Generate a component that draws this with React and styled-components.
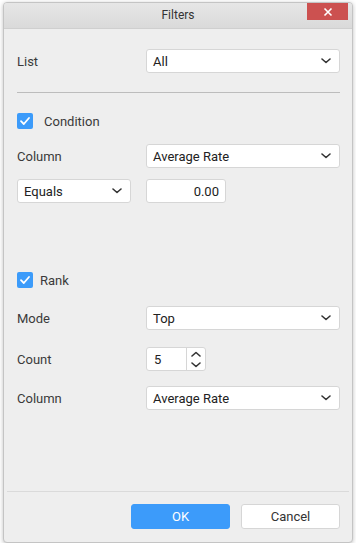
import styled, { createGlobalStyle } from "styled-components";

const Global = createGlobalStyle`
    html, body {
        margin: 0;
        padding: 0;
        background: #ffffff;
        font-family: Roboto, "Liberation Sans", sans-serif;
    }
`;

const Chevron = ({ up }) => (
    <svg width="10" height="6" viewBox="0 0 10 6">
        <path
            d={up ? "M1 5L5 1.5L9 5" : "M1 1L5 4.5L9 1"}
            fill="none"
            stroke="#333"
            strokeWidth="1.6"
            strokeLinecap="round"
            strokeLinejoin="round"
        />
    </svg>
);

const Select = ({ value, width }) => (
    <S.Select $width={width}>
        <span>{value}</span>
        <Chevron />
    </S.Select>
);

const CheckBox = ({ label, gap }) => (
    <S.CheckRow $gap={gap}>
        <S.Box>
            <svg width="12" height="10" viewBox="0 0 12 10">
                <path d="M2 5.2L4.8 8L10 2" fill="none" stroke="#fff" strokeWidth="1.8" strokeLinecap="round" strokeLinejoin="round" />
            </svg>
        </S.Box>
        <S.Label>{label}</S.Label>
    </S.CheckRow>
);

const App = () => {
    return (
        <>
            <Global />
            <S.Dialog>
                <S.TitleBar>
                    Filters
                    <S.Close>
                        <svg width="10" height="10" viewBox="0 0 10 10">
                            <path d="M1.5 1.5L8.5 8.5M8.5 1.5L1.5 8.5" stroke="#fff" strokeWidth="1.6" />
                        </svg>
                    </S.Close>
                </S.TitleBar>

                <S.Body>
                    <S.Row $top={20}>
                        <S.Label>List</S.Label>
                        <Select value="All" />
                    </S.Row>

                    <S.Divider />

                    <CheckBox label="Condition" gap={11} />

                    <S.Row $top={15}>
                        <S.Label>Column</S.Label>
                        <Select value="Average Rate" />
                    </S.Row>

                    <S.Row $top={11}>
                        <Select value="Equals" width={114} />
                        <S.NumberBox>0.00</S.NumberBox>
                    </S.Row>

                    <S.Spacer $h={69} />
                    <CheckBox label="Rank" gap={7} />

                    <S.Row $top={18}>
                        <S.Label>Mode</S.Label>
                        <Select value="Top" />
                    </S.Row>

                    <S.Row $top={17}>
                        <S.Label>Count</S.Label>
                        <S.Spin>
                            <S.SpinValue>5</S.SpinValue>
                            <S.SpinArrows>
                                <Chevron up />
                                <Chevron />
                            </S.SpinArrows>
                        </S.Spin>
                    </S.Row>

                    <S.Row $top={15}>
                        <S.Label>Column</S.Label>
                        <Select value="Average Rate" />
                    </S.Row>
                </S.Body>

                <S.Footer>
                    <S.Button $primary>OK</S.Button>
                    <S.Button>Cancel</S.Button>
                </S.Footer>
            </S.Dialog>
        </>
    );
};

export default App;

const S = {
    Dialog: styled.div`
        position: relative;
        margin: 2px 0 0 3px;
        width: 350px;
        height: 541px;
        box-sizing: border-box;
        border: 1px solid #c4c4c4;
        border-radius: 4px;
        background: #eeeeee;
        box-shadow: 0 1px 4px rgba(0, 0, 0, 0.25);
        display: flex;
        flex-direction: column;
        overflow: hidden;
    `,

    TitleBar: styled.div`
        height: 26px;
        padding-bottom: 2px;
        box-sizing: border-box;
        flex-shrink: 0;
        border-bottom: 1px solid #cfcfcf;
        background: linear-gradient(#e6e6e6, #dadada);
        display: flex;
        align-items: center;
        justify-content: center;
        font-size: 12px;
        color: #333;
    `,

    Close: styled.div`
        position: absolute;
        top: 0;
        right: 4px;
        width: 41px;
        height: 17px;
        background: #cc5150;
        display: flex;
        align-items: center;
        justify-content: center;
    `,

    Body: styled.div`
        flex: 1;
        padding: 0 12px 0 13px;
        display: flex;
        flex-direction: column;
    `,

    Row: styled.div`
        margin-top: ${(p) => p.$top}px;
        display: grid;
        grid-template-columns: 129px 1fr;
        align-items: center;
    `,

    Label: styled.span`
        font-size: 13px;
        color: #3a3a3a;
    `,

    Select: styled.div`
        width: ${(p) => (p.$width ? `${p.$width}px` : "auto")};
        height: 24px;
        box-sizing: border-box;
        background: #fff;
        border: 1px solid #d6d6d6;
        border-radius: 3px;
        padding: 0 8px 0 6px;
        display: flex;
        align-items: center;
        justify-content: space-between;
        font-size: 13px;
        color: #222;
    `,

    Divider: styled.div`
        margin-top: 19px;
        height: 1px;
        background: #bcbcbc;
    `,

    CheckRow: styled.div`
        margin-top: 20px;
        display: flex;
        align-items: center;
        gap: ${(p) => p.$gap}px;
    `,

    Box: styled.div`
        width: 16px;
        height: 16px;
        border-radius: 2px;
        background: #3c9bfa;
        display: flex;
        align-items: center;
        justify-content: center;
    `,

    NumberBox: styled.div`
        width: 80px;
        height: 24px;
        box-sizing: border-box;
        background: #fff;
        border: 1px solid #d6d6d6;
        border-radius: 3px;
        padding: 0 6px;
        display: flex;
        align-items: center;
        justify-content: flex-end;
        font-size: 13px;
        color: #222;
    `,

    Spacer: styled.div`
        height: ${(p) => p.$h - 20}px;
    `,

    Spin: styled.div`
        width: 60px;
        height: 24px;
        box-sizing: border-box;
        background: #fff;
        border: 1px solid #d6d6d6;
        border-radius: 3px;
        display: flex;
    `,

    SpinValue: styled.div`
        flex: 1;
        padding-left: 7px;
        display: flex;
        align-items: center;
        font-size: 13px;
        color: #222;
        border-right: 1px solid #d6d6d6;
    `,

    SpinArrows: styled.div`
        width: 18px;
        display: flex;
        flex-direction: column;
        align-items: center;
        justify-content: center;
        gap: 5px;
    `,

    Footer: styled.div`
        height: 51px;
        box-sizing: border-box;
        flex-shrink: 0;
        margin: 0 3px;
        border-top: 1px solid #dadada;
        padding: 12px 9px 0 0;
        display: flex;
        justify-content: flex-end;
        align-items: flex-start;
        gap: 11px;
    `,

    Button: styled.div`
        width: 99px;
        height: 25px;
        box-sizing: border-box;
        border-radius: 3px;
        border: 1px solid ${(p) => (p.$primary ? "#3c9bfa" : "#d6d6d6")};
        background: ${(p) => (p.$primary ? "#3c9bfa" : "#fff")};
        color: ${(p) => (p.$primary ? "#fff" : "#333")};
        font-size: 13px;
        display: flex;
        align-items: center;
        justify-content: center;
    `,
};
